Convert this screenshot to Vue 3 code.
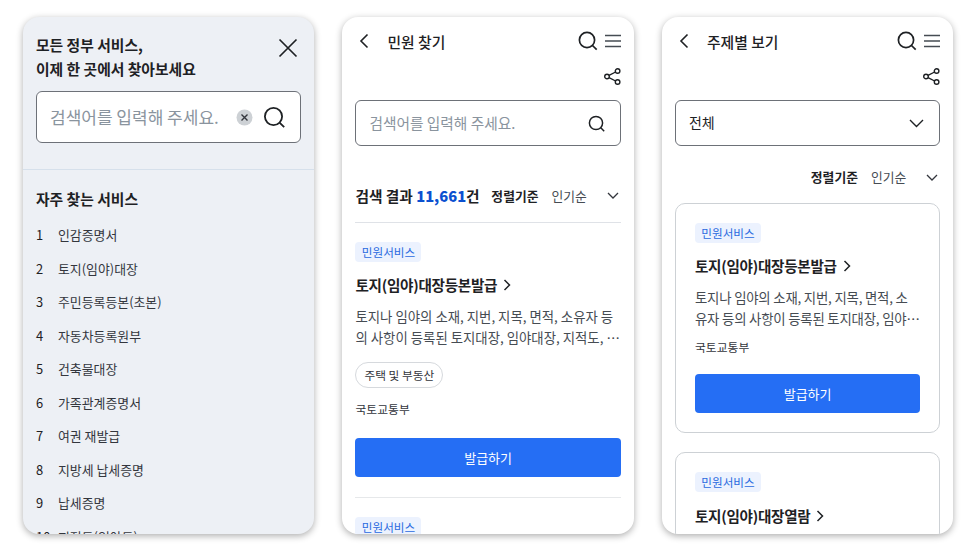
<script setup>
const services = [
  '인감증명서',
  '토지(임야)대장',
  '주민등록등본(초본)',
  '자동차등록원부',
  '건축물대장',
  '가족관계증명서',
  '여권 재발급',
  '지방세 납세증명',
  '납세증명',
  '지적도(임야도)'
]
</script>

<template>
  <div class="page">
    <!-- 첫 화면: 검색 패널 -->
    <section class="phone panel">
      <div class="panel-head">
        <h1 class="panel-title">모든 정부 서비스,<br />이제 한 곳에서 찾아보세요</h1>
        <svg class="close" width="22" height="22" viewBox="0 0 22 22" fill="none" stroke="#1e2124" stroke-width="1.7">
          <path d="M2.5 2.5l17 17M19.5 2.5l-17 17" />
        </svg>
      </div>
      <div class="search search-large">
        <span class="placeholder">검색어를 입력해 주세요.</span>
        <svg class="clear" width="17" height="17" viewBox="0 0 17 17">
          <circle cx="8.5" cy="8.5" r="8" fill="#cdd1d5" />
          <path d="M5.5 5.5l6 6M11.5 5.5l-6 6" stroke="#33363d" stroke-width="1.4" fill="none" />
        </svg>
        <svg width="23" height="23" viewBox="0 0 23 23" fill="none" stroke="#1e2124" stroke-width="1.8">
          <circle cx="10.5" cy="10.5" r="8.6" />
          <path d="M16.8 16.8l4.4 4.4" />
        </svg>
      </div>
      <div class="panel-line"></div>
      <h2 class="freq-title">자주 찾는 서비스</h2>
      <ol class="freq-list">
        <li v-for="(name, i) in services" :key="name">
          <span class="num">{{ i + 1 }}</span>{{ name }}
        </li>
      </ol>
    </section>

    <!-- 두번째 화면: 민원 찾기 -->
    <section class="phone">
      <header class="top">
        <svg class="back" width="12" height="16" viewBox="0 0 12 16" fill="none" stroke="#1e2124" stroke-width="1.6">
          <path d="M9.5 1.5L3 8l6.5 6.5" />
        </svg>
        <span class="top-title">민원 찾기</span>
        <svg class="top-search" width="20" height="20" viewBox="0 0 20 20" fill="none" stroke="#1e2124" stroke-width="1.7">
          <circle cx="9" cy="9" r="7.6" />
          <path d="M14.5 14.5l4.2 4.2" />
        </svg>
        <svg width="16" height="14" viewBox="0 0 16 14" fill="none" stroke="#464c53" stroke-width="1.4">
          <path d="M0 1.5h16M0 7h16M0 12.5h16" />
        </svg>
      </header>
      <div class="share-row">
        <svg width="17" height="17" viewBox="0 0 17 17" fill="none" stroke="#1e2124" stroke-width="1.4">
          <circle cx="13.6" cy="3" r="2.3" /><circle cx="3" cy="8.5" r="2.3" /><circle cx="13.6" cy="14" r="2.3" />
          <path d="M5 7.4l6.6-3.4M5 9.6l6.6 3.4" />
        </svg>
      </div>
      <div class="search search-mid">
        <span class="placeholder">검색어를 입력해 주세요.</span>
        <svg width="17" height="17" viewBox="0 0 17 17" fill="none" stroke="#1e2124" stroke-width="1.5">
          <circle cx="8" cy="8" r="6.6" />
          <path d="M12.8 12.8l3.4 3.4" />
        </svg>
      </div>
      <div class="result-row">
        <span class="result">검색 결과 <b>11,661</b>건</span>
        <span class="sort-label">정렬기준</span>
        <span class="sort-value">인기순</span>
        <svg class="sort-arrow" width="12" height="7" viewBox="0 0 12 7" fill="none" stroke="#33363d" stroke-width="1.3">
          <path d="M1 1l5 5 5-5" />
        </svg>
      </div>
      <article class="item">
        <span class="tag">민원서비스</span>
        <h3 class="item-title">토지(임야)대장등본발급
          <svg width="8" height="12" viewBox="0 0 8 12" fill="none" stroke="#1e2124" stroke-width="1.5"><path d="M1.5 1l5 5-5 5" /></svg>
        </h3>
        <p class="desc">토지나 임야의 소재, 지번, 지목, 면적, 소유자 등의 사항이 등록된 토지대장, 임야대장, 지적도, …</p>
        <span class="pill">주택 및 부동산</span>
        <div class="org">국토교통부</div>
        <button class="issue">발급하기</button>
      </article>
      <article class="item next">
        <span class="tag">민원서비스</span>
      </article>
    </section>

    <!-- 세번째 화면: 주제별 보기 -->
    <section class="phone">
      <header class="top">
        <svg class="back" width="12" height="16" viewBox="0 0 12 16" fill="none" stroke="#1e2124" stroke-width="1.6">
          <path d="M9.5 1.5L3 8l6.5 6.5" />
        </svg>
        <span class="top-title">주제별 보기</span>
        <svg class="top-search" width="20" height="20" viewBox="0 0 20 20" fill="none" stroke="#1e2124" stroke-width="1.7">
          <circle cx="9" cy="9" r="7.6" />
          <path d="M14.5 14.5l4.2 4.2" />
        </svg>
        <svg width="16" height="14" viewBox="0 0 16 14" fill="none" stroke="#464c53" stroke-width="1.4">
          <path d="M0 1.5h16M0 7h16M0 12.5h16" />
        </svg>
      </header>
      <div class="share-row">
        <svg width="17" height="17" viewBox="0 0 17 17" fill="none" stroke="#1e2124" stroke-width="1.4">
          <circle cx="13.6" cy="3" r="2.3" /><circle cx="3" cy="8.5" r="2.3" /><circle cx="13.6" cy="14" r="2.3" />
          <path d="M5 7.4l6.6-3.4M5 9.6l6.6 3.4" />
        </svg>
      </div>
      <div class="search search-mid select">
        <span class="select-text">전체</span>
        <svg width="15" height="9" viewBox="0 0 15 9" fill="none" stroke="#1e2124" stroke-width="1.4">
          <path d="M1 1l6.5 6.5L14 1" />
        </svg>
      </div>
      <div class="sort-row">
        <span class="sort-label">정렬기준</span>
        <span class="sort-value">인기순</span>
        <svg class="sort-arrow" width="12" height="7" viewBox="0 0 12 7" fill="none" stroke="#33363d" stroke-width="1.3">
          <path d="M1 1l5 5 5-5" />
        </svg>
      </div>
      <article class="card">
        <span class="tag">민원서비스</span>
        <h3 class="item-title">토지(임야)대장등본발급
          <svg width="8" height="12" viewBox="0 0 8 12" fill="none" stroke="#1e2124" stroke-width="1.5"><path d="M1.5 1l5 5-5 5" /></svg>
        </h3>
        <p class="desc">토지나 임야의 소재, 지번, 지목, 면적, 소<br />유자 등의 사항이 등록된 토지대장, 임야…</p>
        <div class="org">국토교통부</div>
        <button class="issue">발급하기</button>
      </article>
      <article class="card">
        <span class="tag">민원서비스</span>
        <h3 class="item-title second">토지(임야)대장열람
          <svg width="8" height="12" viewBox="0 0 8 12" fill="none" stroke="#1e2124" stroke-width="1.5"><path d="M1.5 1l5 5-5 5" /></svg>
        </h3>
      </article>
    </section>
  </div>
</template>

<style scoped>
.page {
  display: flex;
  gap: 28.2px;
  width: 972px;
  height: 548px;
  box-sizing: border-box;
  padding: 17px 0 0 23px;
  overflow: hidden;
  background: #fff;
  font-family: "Noto Sans CJK KR", "Noto Sans", sans-serif;
  color: #1e2124;
}
.phone {
  width: 291.3px;
  height: 517px;
  box-sizing: border-box;
  padding: 0 13px;
  border-radius: 16px;
  background: #fff;
  box-shadow: 0 2px 7px rgba(0, 0, 0, 0.32);
  overflow: hidden;
  flex-shrink: 0;
}

/* 검색 패널 */
.panel {
  background: #edf0f5;
}
.panel-head {
  display: flex;
  justify-content: space-between;
  padding-top: 16px;
}
.panel-title {
  margin: 0;
  font-size: 14.8px;
  font-weight: 700;
  line-height: 24px;
}
.close {
  margin: 4px 2px 0 0;
}
.search {
  display: flex;
  align-items: center;
  box-sizing: border-box;
  background: #fff;
  border: 1px solid #6d7178;
  border-radius: 6px;
}
.search-large {
  height: 52px;
  margin-top: 10px;
  padding: 0 14px 0 13px;
}
.search-large .placeholder {
  flex: 1;
  font-size: 17px;
  padding-bottom: 1px;
}
.clear {
  margin-right: 10px;
}
.placeholder {
  color: #8a949e;
}
.panel-line {
  height: 1px;
  margin: 26px -13px 0;
  background: #d6e0eb;
}
.freq-title {
  margin: 18px 0 0;
  font-size: 14.8px;
  font-weight: 700;
  line-height: 22px;
}
.freq-list {
  margin: 8px 0 0;
  padding: 0;
  list-style: none;
}
.freq-list li {
  display: flex;
  height: 33.5px;
  align-items: center;
  font-size: 12.9px;
  color: #33363d;
}
.num {
  width: 22px;
  color: #1e2124;
}

/* 상단 헤더 */
.top {
  display: flex;
  align-items: center;
  height: 48px;
}
.back {
  margin-left: 3px;
}
.top-title {
  flex: 1;
  margin-left: 17px;
  font-size: 14.8px;
  font-weight: 500;
}
.top-search {
  margin-right: 7px;
}
.share-row {
  display: flex;
  justify-content: flex-end;
  height: 24px;
  margin-top: 3px;
}
.search-mid {
  height: 46px;
  margin-top: 8px;
  padding: 0 15px 0 13px;
  justify-content: space-between;
}
.search-mid .placeholder {
  font-size: 14.7px;
  padding-bottom: 2px;
}
.select-text {
  font-size: 14px;
  padding-bottom: 2px;
}

/* 정렬 */
.result-row {
  display: flex;
  align-items: flex-end;
  height: 77px;
  padding-bottom: 15px;
  border-bottom: 1px solid #dfe2e7;
  box-sizing: border-box;
}
.result {
  flex: 1;
  font-size: 14.7px;
  font-weight: 700;
  line-height: 22px;
}
.result b {
  color: #0b50d0;
}
.sort-label {
  font-size: 12.8px;
  font-weight: 700;
  line-height: 22px;
}
.sort-value {
  margin-left: 13px;
  font-size: 12.8px;
  line-height: 22px;
  color: #464c53;
}
.sort-arrow {
  margin-left: 20px;
  margin-right: 2px;
  margin-bottom: 8px;
}
.sort-row {
  display: flex;
  justify-content: flex-end;
  align-items: center;
  height: 22px;
  margin-top: 20px;
}
.sort-row .sort-arrow {
  margin-bottom: 0;
}

/* 목록 */
.item {
  padding: 19px 0 20px;
  border-bottom: 1px solid #e6e8ea;
}
.item.next {
  border-bottom: 0;
}
.tag {
  display: block;
  width: 66px;
  height: 20px;
  border-radius: 4px;
  background: #ecf2fe;
  color: #2a6ae0;
  font-size: 11.6px;
  line-height: 20px;
  text-align: center;
}
.item-title {
  display: flex;
  align-items: center;
  gap: 6px;
  margin: 12px 0 0;
  font-size: 14.6px;
  font-weight: 700;
  line-height: 22px;
  letter-spacing: -0.3px;
}
.item-title.second {
  margin-top: 13px;
}
.desc {
  margin: 10px 0 0;
  font-size: 13.4px;
  line-height: 21px;
  color: #464c53;
}
.pill {
  display: inline-block;
  box-sizing: border-box;
  height: 26px;
  margin-top: 14px;
  padding: 0 8px;
  border: 1px solid #d6d9dd;
  border-radius: 13px;
  font-size: 11.7px;
  line-height: 24px;
  color: #33363d;
}
.org {
  margin-top: 12px;
  font-size: 11.8px;
  line-height: 18px;
  color: #33363d;
}
.issue {
  display: block;
  width: 100%;
  height: 39px;
  margin-top: 20px;
  border: 0;
  border-radius: 4px;
  background: #256ef4;
  color: #fff;
  font-family: inherit;
  font-size: 13px;
}

/* 카드 */
.card {
  padding: 19px;
  border: 1px solid #cdd1d5;
  border-radius: 10px;
  margin-top: 15px;
}
.card + .card {
  margin-top: 19px;
}
.card .desc {
  letter-spacing: -0.2px;
}
.card .org {
  margin-top: 9px;
}
.card .issue {
  margin-top: 18px;
}
</style>
